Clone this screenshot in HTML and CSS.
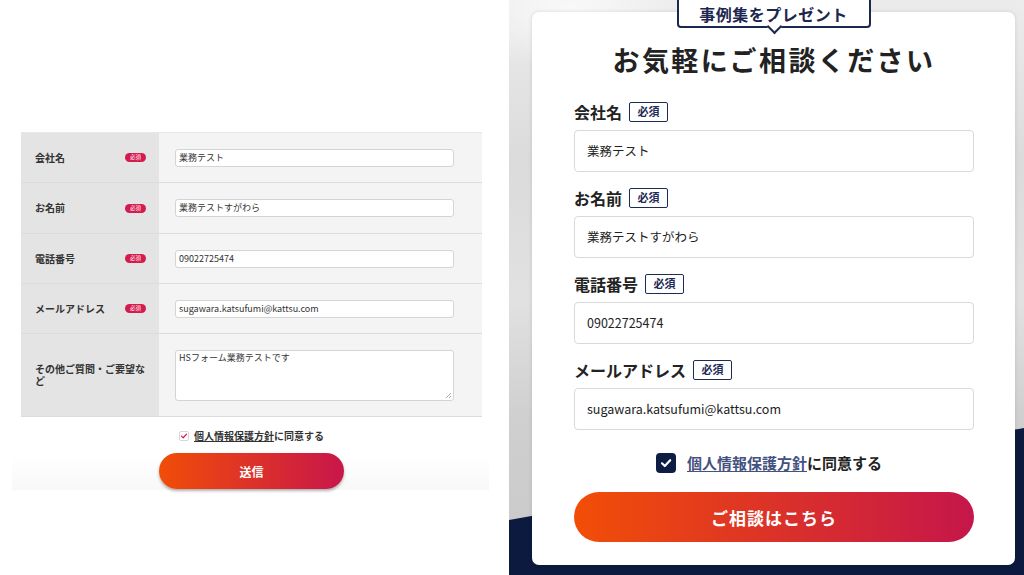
FILE: index.html
```html
<!DOCTYPE html>
<html lang="ja">
<head>
<meta charset="utf-8">
<link rel="stylesheet" href="styles.css">
</head>
<body>
<div class="page">
  <section class="left">
    <div class="lform">
      <div class="ltable">
        <div class="lrow">
          <div class="lhead"><span>会社名</span><span class="pill">必須</span></div>
          <div class="lcell"><div class="linput">業務テスト</div></div>
        </div>
        <div class="lrow r2">
          <div class="lhead"><span>お名前</span><span class="pill">必須</span></div>
          <div class="lcell"><div class="linput">業務テストすがわら</div></div>
        </div>
        <div class="lrow">
          <div class="lhead"><span>電話番号</span><span class="pill">必須</span></div>
          <div class="lcell"><div class="linput">09022725474</div></div>
        </div>
        <div class="lrow">
          <div class="lhead"><span>メールアドレス</span><span class="pill">必須</span></div>
          <div class="lcell"><div class="linput">sugawara.katsufumi@kattsu.com</div></div>
        </div>
        <div class="lrow tall">
          <div class="lhead"><span class="wrap">その他ご質問・ご要望など</span></div>
          <div class="lcell"><div class="ltextarea">HSフォーム業務テストです<span class="grip"></span></div></div>
        </div>
      </div>
      <div class="lagree">
        <span class="lcheck"><svg viewBox="0 0 10 10" width="8" height="8"><path d="M1.8 5.2 L4 7.2 L8.2 2.6" fill="none" stroke="#d8194b" stroke-width="1.5" stroke-linecap="round" stroke-linejoin="round"/></svg></span>
        <span><u>個人情報保護方針</u>に同意する</span>
      </div>
      <div class="lbtnrow"><span class="lbtn">送信</span></div>
    </div>
  </section>
  <section class="right">
    <div class="card">
      <div class="present">事例集をプレゼント</div>
      <h1 class="title">お気軽にご相談ください</h1>
      <div class="field">
        <div class="label">会社名<span class="req">必須</span></div>
        <div class="input">業務テスト</div>
      </div>
      <div class="field">
        <div class="label">お名前<span class="req">必須</span></div>
        <div class="input">業務テストすがわら</div>
      </div>
      <div class="field">
        <div class="label">電話番号<span class="req">必須</span></div>
        <div class="input">09022725474</div>
      </div>
      <div class="field">
        <div class="label">メールアドレス<span class="req">必須</span></div>
        <div class="input">sugawara.katsufumi@kattsu.com</div>
      </div>
      <div class="agree">
        <span class="check"><svg viewBox="0 0 20 20" width="20" height="20"><path d="M6 10.3 L8.8 13 L14.2 7.2" fill="none" stroke="#fff" stroke-width="2.2" stroke-linecap="round" stroke-linejoin="round"/></svg></span>
        <span><a class="link">個人情報保護方針</a>に同意する</span>
      </div>
      <div class="btn">ご相談はこちら</div>
    </div>
  </section>
</div>
</body>
</html>
```
FILE: styles.css
```css
* { box-sizing: border-box; }
html, body { margin: 0; padding: 0; }
body {
  width: 1024px;
  height: 575px;
  overflow: hidden;
  background: #fff;
  font-family: "Noto Sans CJK JP", "Noto Sans", sans-serif;
  color: #222;
}
.page {
  display: flex;
  width: 1024px;
  height: 575px;
}

/* ---------- left ---------- */
.left {
  width: 509px;
  flex: none;
  padding-left: 12px;
}
.lform {
  width: 477px;
  height: 490px;
  padding: 132px 7px 0 9px;
  background: linear-gradient(to bottom, #fff 0, #fff 455px, #f8f8f8 490px);
}
.ltable {
  border-top: 1px solid #e8e8e8;
}
.lrow {
  display: grid;
  grid-template-columns: 138px 1fr;
  height: 50px;
  border-bottom: 1px solid #dcdcdc;
}
.lrow.r2 { height: 51px; }
.lrow.tall { height: 83px; }
.lhead {
  background: #e4e4e4;
  display: flex;
  align-items: center;
  justify-content: space-between;
  padding: 0 13px 0 14px;
  font-size: 10px;
  font-weight: 700;
  color: #333;
  line-height: 12px;
}
.wrap { display: block; width: 111px; }
.pill {
  background: #d51a4c;
  color: #fff;
  font-size: 5.5px;
  line-height: 9px;
  height: 9px;
  width: 21px;
  text-align: center;
  border-radius: 5px;
  font-weight: 400;
}
.lcell {
  background: #f4f4f4;
  display: flex;
  align-items: center;
  padding-left: 16px;
}
.linput {
  width: 279px;
  height: 18px;
  background: #fff;
  border: 1px solid #d4d4d4;
  border-radius: 3px;
  font-size: 9px;
  line-height: 16px;
  padding-left: 3px;
  color: #333;
}
.ltextarea {
  position: relative;
  width: 279px;
  height: 51px;
  background: #fff;
  border: 1px solid #d4d4d4;
  border-radius: 3px;
  font-size: 9px;
  line-height: 12px;
  padding: 1px 3px;
  color: #333;
}
.grip {
  position: absolute;
  right: 2px;
  bottom: 2px;
  width: 5px;
  height: 5px;
  background: linear-gradient(135deg, transparent 45%, #aaa 45%, #aaa 55%, transparent 55%, transparent 75%, #aaa 75%, #aaa 85%, transparent 85%);
}
.lagree {
  display: flex;
  justify-content: center;
  align-items: center;
  gap: 5px;
  margin-top: 13px;
  font-size: 10px;
  font-weight: 700;
  color: #333;
  line-height: 12px;
}
.lagree u { text-decoration-thickness: 1px; }
.lcheck {
  width: 10px;
  height: 10px;
  border: 1px solid #d8d8d8;
  border-radius: 2px;
  background: #fff;
  display: flex;
  align-items: center;
  justify-content: center;
}
.lbtnrow {
  display: flex;
  justify-content: center;
  margin-top: 11px;
}
.lbtn {
  width: 185px;
  height: 36px;
  border-radius: 18px;
  background: linear-gradient(to right, #f14d08, #c8164a);
  color: #fff;
  font-size: 12px;
  font-weight: 700;
  display: flex;
  align-items: center;
  justify-content: center;
  box-shadow: 0 2px 3px rgba(0,0,0,0.3);
}

/* ---------- right ---------- */
.right {
  position: relative;
  flex: 1;
  padding: 12px 9px 10px 23px;
  background:
    radial-gradient(ellipse 120px 60px at 60px 10px, rgba(255,255,255,0.7), rgba(255,255,255,0)),
    linear-gradient(to bottom, #ececec 0, #dcdbdb 160px, #e2e1e1 300px, #d0cfcf 420px, #c9c9c9 575px);
  overflow: hidden;
}
.right::before {
  content: "";
  position: absolute;
  left: 0;
  right: 0;
  bottom: 0;
  height: 150px;
  background: #0b1a3e;
  clip-path: polygon(0 95px, 100% 3px, 100% 100%, 0 100%);
}
.card {
  position: relative;
  height: 553px;
  background: #fff;
  border-radius: 7px;
  box-shadow: 0 0 4px rgba(0,0,0,0.12);
  padding: 32px 41px 0 42px;
}
.present {
  position: absolute;
  top: -16px;
  left: 50%;
  transform: translateX(-50%);
  width: 194px;
  height: 32px;
  border: 2px solid #1c2750;
  border-radius: 0 0 4px 4px;
  background: #fff;
  color: #1c2750;
  font-size: 16px;
  font-weight: 700;
  letter-spacing: 0.5px;
  text-align: center;
  line-height: 28px;
  padding-top: 2px;
}
.present::after {
  content: "";
  position: absolute;
  left: 50%;
  bottom: -6px;
  width: 9px;
  height: 9px;
  margin-left: -5px;
  background: #fff;
  border-right: 2px solid #1c2750;
  border-bottom: 2px solid #1c2750;
  transform: rotate(45deg);
}
.title {
  margin: 0 0 26px;
  text-align: center;
  font-size: 27px;
  line-height: 32px;
  font-weight: 700;
  letter-spacing: 2.4px;
  color: #222;
}
.field { margin-bottom: 16px; }
.label {
  display: flex;
  align-items: center;
  gap: 7px;
  height: 20px;
  font-size: 16px;
  font-weight: 700;
  color: #222;
  margin-bottom: 8px;
}
.req {
  display: inline-block;
  width: 39px;
  height: 20px;
  border: 1.5px solid #1f2b57;
  border-radius: 2px;
  color: #1f2b57;
  font-size: 11px;
  line-height: 17px;
  text-align: center;
  font-weight: 700;
}
.input {
  height: 42px;
  border: 1px solid #d9d9d9;
  border-radius: 4px;
  padding-left: 12px;
  font-size: 12.5px;
  line-height: 40px;
  color: #222;
}
.agree {
  display: flex;
  justify-content: center;
  align-items: center;
  gap: 11px;
  margin-top: 23px;
  padding-right: 10px;
  font-size: 15px;
  font-weight: 700;
  color: #222;
  line-height: 20px;
}
.check {
  width: 20px;
  height: 20px;
  border-radius: 4px;
  background: #0e1d44;
  display: block;
}
.check svg { display: block; }
.link {
  color: #45527f;
  text-decoration: underline;
  text-decoration-thickness: 1px;
  text-underline-offset: 2px;
}
.btn {
  margin-top: 19px;
  height: 50px;
  border-radius: 25px;
  background: linear-gradient(to right, #f24e07, #c5164a);
  color: #fff;
  font-size: 17px;
  font-weight: 700;
  letter-spacing: 1px;
  display: flex;
  align-items: center;
  justify-content: center;
}
```
